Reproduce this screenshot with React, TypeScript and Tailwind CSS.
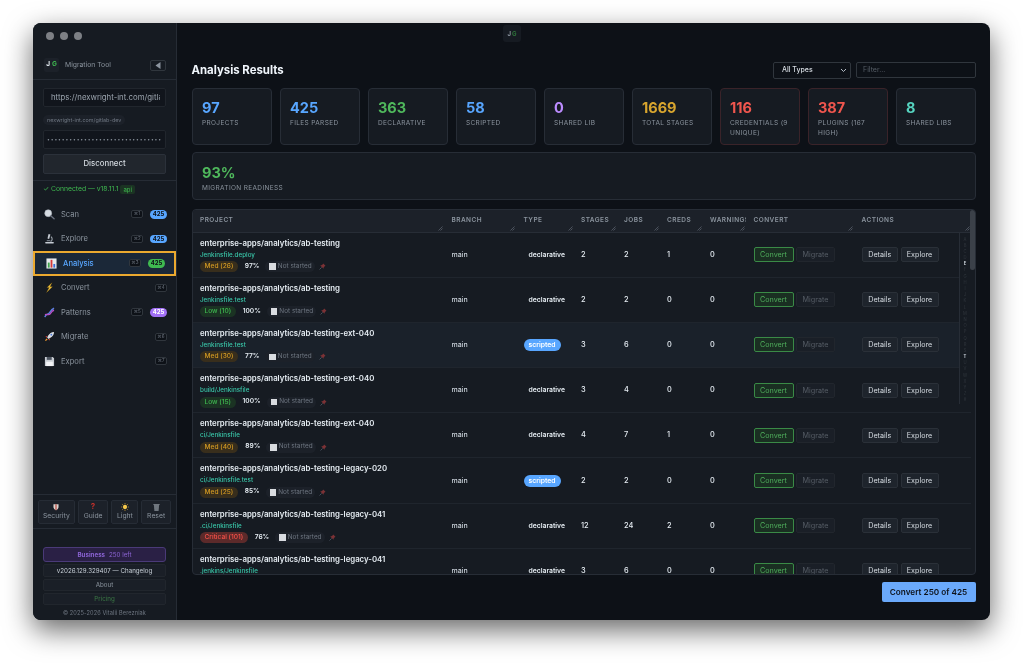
import React from "react";

const F = "font-['Inter','Liberation_Sans',sans-serif]";

function IconScan() {
  return (
    <svg width="11" height="11" viewBox="0 0 12 12">
      <circle cx="4.6" cy="4.6" r="3.8" fill="#d7dde3" stroke="#aab2bb" strokeWidth="0.6" />
      <path d="M7.6 7.6L11 10.6" stroke="#6b7280" strokeWidth="1.5" strokeLinecap="round" />
    </svg>
  );
}
function IconMicroscope() {
  return (
    <svg width="11" height="11" viewBox="0 0 12 12" fill="none">
      <path d="M5 1l2 .6-1.4 5-1.8-.6z" fill="#c6ccd3" />
      <path d="M7.6 4a3.2 3.2 0 0 1-.4 5.4" stroke="#a8b0b9" strokeWidth="1.1" />
      <path d="M2 10.6h8" stroke="#c6ccd3" strokeWidth="1.5" strokeLinecap="round" />
      <path d="M3 8.4h4" stroke="#8f98a3" strokeWidth="1" />
    </svg>
  );
}
function IconChart() {
  return (
    <svg width="11" height="11" viewBox="0 0 12 12">
      <rect x="0.5" y="0.5" width="11" height="11" fill="#e8ebee" />
      <rect x="2" y="5" width="2" height="5.5" fill="#3fa34d" />
      <rect x="5" y="2" width="2" height="8.5" fill="#d83a3a" />
      <rect x="8" y="6.5" width="2" height="4" fill="#3b6fd8" />
    </svg>
  );
}
function IconBolt() {
  return (
    <svg width="11" height="11" viewBox="0 0 12 12">
      <path d="M8.6 0.8L3.4 6h2.4L2.8 11.4l6.4-6.2H6.6z" fill="#f0c23a" stroke="#9a7414" strokeWidth="0.3" />
    </svg>
  );
}
function IconDna() {
  return (
    <svg width="11" height="11" viewBox="0 0 12 12" fill="none">
      <path d="M1 11C1.6 7 5 8.6 6.6 5.6 8 3 9 2 11 1.4" stroke="#5b7fe0" strokeWidth="1.7" />
      <path d="M1 8.4c3-.8 4.6 1 6-1.2 1.2-2 2-3.4 4-3.6" stroke="#b84fc4" strokeWidth="1.5" />
    </svg>
  );
}
function IconRocket() {
  return (
    <svg width="11" height="11" viewBox="0 0 12 12">
      <path d="M11 1c-3 .2-5 1.6-6.4 4L3.4 7l1.6 1.6 2-1.2C9.4 6 10.8 4 11 1z" fill="#d9dde2" />
      <path d="M3.6 5.2L1.6 6l1.2 1.4zM6.8 8.4L6 10.4 4.6 9.2z" fill="#d83a3a" />
      <path d="M2.8 8.2c-1 .6-1.4 1.8-1.6 2.8 1-.2 2.2-.6 2.8-1.6z" fill="#f29a2e" />
      <circle cx="8" cy="4" r="1" fill="#4a78d8" />
    </svg>
  );
}
function IconSave() {
  return (
    <svg width="11" height="11" viewBox="0 0 12 12">
      <path d="M1 1h8.5L11 2.5V11H1z" fill="#c9ced4" />
      <rect x="3" y="1" width="5.4" height="3.2" fill="#4d5560" />
      <rect x="2.4" y="6.2" width="7.2" height="4.8" fill="#f3f4f6" />
    </svg>
  );
}
function IconShield() {
  return (
    <svg width="6" height="8" viewBox="0 0 8 9">
      <path d="M0.6 0.8h6.8v3.6C7.4 6.4 5.8 8 4 8.8 2.2 8 .6 6.4.6 4.4z" fill="#d9d4cf" />
      <path d="M3.2 0.8h1.6v7.8L4 8.8l-.8-.4z" fill="#b9473f" />
    </svg>
  );
}
function IconSun() {
  return (
    <svg width="8" height="8" viewBox="0 0 9 9">
      <circle cx="4.5" cy="4.5" r="2.4" fill="#f5c84a" />
      <path d="M4.5 0v1.4M4.5 7.6V9M0 4.5h1.4M7.6 4.5H9M1.3 1.3l1 1M6.7 6.7l1 1M7.7 1.3l-1 1M2.3 6.7l-1 1" stroke="#e0a92c" strokeWidth="0.7" />
    </svg>
  );
}
function IconTrash() {
  return (
    <svg width="7" height="8" viewBox="0 0 8 9">
      <path d="M0.4 1h7.2v1H0.4z" fill="#8c939b" />
      <path d="M1 2.2h6L6.4 9H1.6z" fill="#6f767e" />
    </svg>
  );
}
function IconPin() {
  return (
    <svg width="7" height="7" viewBox="0 0 8 8">
      <path d="M4.8 0.6L7.4 3.2 6.5 3.6 5.3 5.2 5.2 6.6 1.4 2.8 2.8 2.7 4.4 1.5z" fill="#7c3236" />
      <path d="M3 5L.6 7.4" stroke="#6b7280" strokeWidth="0.7" />
    </svg>
  );
}
function Grip() {
  return (
    <svg width="5" height="5" viewBox="0 0 5 5" className="absolute right-[1px] bottom-[1px]">
      <path d="M0.5 4.5L4.5 0.5M2.5 4.5L4.5 2.5" stroke="#6b7280" strokeWidth="0.6" />
    </svg>
  );
}

const nav = [
  { n: "Scan", i: <IconScan />, k: "⌘1", b: "425", c: "bg-[#58a6ff] text-[#0d1117]" },
  { n: "Explore", i: <IconMicroscope />, k: "⌘2", b: "425", c: "bg-[#58a6ff] text-[#0d1117]" },
  { n: "Analysis", i: <IconChart />, k: "⌘3", b: "425", c: "bg-[#3fb950] text-[#0d1117]", active: true },
  { n: "Convert", i: <IconBolt />, k: "⌘4" },
  { n: "Patterns", i: <IconDna />, k: "⌘5", b: "425", c: "bg-[#a371f7] text-white" },
  { n: "Migrate", i: <IconRocket />, k: "⌘6" },
  { n: "Export", i: <IconSave />, k: "⌘7" },
];

const stats = [
  { v: "97", l: "Projects", c: "text-[#58a6ff]" },
  { v: "425", l: "Files Parsed", c: "text-[#58a6ff]" },
  { v: "363", l: "Declarative", c: "text-[#4fb85c]" },
  { v: "58", l: "Scripted", c: "text-[#58a6ff]" },
  { v: "0", l: "Shared Lib", c: "text-[#bc8cff]" },
  { v: "1669", l: "Total Stages", c: "text-[#d8a52e]" },
  { v: "116", l: "Credentials (9 unique)", c: "text-[#f0564e]", d: true },
  { v: "387", l: "Plugins (167 high)", c: "text-[#f0564e]", d: true },
  { v: "8", l: "Shared Libs", c: "text-[#56d4c0]" },
];

type Risk = "Med" | "Low" | "Critical";
const riskCls: Record<Risk, string> = {
  Med: "bg-[#382e1c] text-[#d29922]",
  Low: "bg-[#1b3323] text-[#3fb950]",
  Critical: "bg-[#5c2a2a] text-[#f85149]",
};

const rows: {
  p: string; f: string; r: Risk; s: number; pct: string; t: string; st: number; j: number; cr: number; alt?: boolean;
}[] = [
  { p: "enterprise-apps/analytics/ab-testing", f: "Jenkinsfile.deploy", r: "Med", s: 26, pct: "97%", t: "declarative", st: 2, j: 2, cr: 1 },
  { p: "enterprise-apps/analytics/ab-testing", f: "Jenkinsfile.test", r: "Low", s: 10, pct: "100%", t: "declarative", st: 2, j: 2, cr: 0 },
  { p: "enterprise-apps/analytics/ab-testing-ext-040", f: "Jenkinsfile.test", r: "Med", s: 30, pct: "77%", t: "scripted", st: 3, j: 6, cr: 0, alt: true },
  { p: "enterprise-apps/analytics/ab-testing-ext-040", f: "build/Jenkinsfile", r: "Low", s: 15, pct: "100%", t: "declarative", st: 3, j: 4, cr: 0 },
  { p: "enterprise-apps/analytics/ab-testing-ext-040", f: "ci/Jenkinsfile", r: "Med", s: 40, pct: "89%", t: "declarative", st: 4, j: 7, cr: 1 },
  { p: "enterprise-apps/analytics/ab-testing-legacy-020", f: "ci/Jenkinsfile.test", r: "Med", s: 25, pct: "85%", t: "scripted", st: 2, j: 2, cr: 0 },
  { p: "enterprise-apps/analytics/ab-testing-legacy-041", f: ".ci/Jenkinsfile", r: "Critical", s: 101, pct: "76%", t: "declarative", st: 12, j: 24, cr: 2 },
  { p: "enterprise-apps/analytics/ab-testing-legacy-041", f: ".jenkins/Jenkinsfile", r: "Med", s: 20, pct: "90%", t: "declarative", st: 3, j: 6, cr: 0 },
];

const letters = "ABCDEFGHIJKLMNOPQRSTUVWXYZ#".split("");
const heads = ["Project", "Branch", "Type", "Stages", "Jobs", "Creds", "Warnings", "Convert", "Actions"];
const numCell = "pl-[7.5px] text-[7.4px] leading-[10px] font-medium text-[#e6edf3]";

export default function App() {
  return (
    <div className={`${F} w-[1024px] h-[665px] bg-white pt-[23px] pl-[33px] overflow-hidden antialiased blur-[0.3px]`}>
      <div className="flex w-[957px] h-[597px] rounded-[8px] overflow-hidden bg-[#0d1117] shadow-[0_10px_28px_rgba(0,0,0,0.6)]">
        {/* Sidebar */}
        <aside className="flex flex-col w-[144px] shrink-0 bg-[#161b22] border-r border-[#262c35]">
          <div className="px-[10px] pt-[9px] h-[57px] border-b border-[#262c35]">
            <div className="flex gap-[6px] px-[3px]">
              <span className="w-[8px] h-[8px] rounded-full bg-[#7d8085]" />
              <span className="w-[8px] h-[8px] rounded-full bg-[#7d8085]" />
              <span className="w-[8px] h-[8px] rounded-full bg-[#7d8085]" />
            </div>
            <div className="flex items-center mt-[18px]">
              <span className="w-[15px] h-[14px] ml-[1px] flex items-center justify-center text-[6.5px] font-bold text-[#e6edf3] bg-[#1c2129] rounded-[2px]">J<span className="ml-[2px] text-[#3fb950]">G</span></span>
              <span className="ml-[6px] text-[6.8px] text-[#8b949e]">Migration Tool</span>
              <span className="ml-auto w-[16px] h-[11px] border border-[#30363d] rounded-[2px] flex items-center justify-center">
                <svg width="6" height="7" viewBox="0 0 6 7"><path d="M5.5 0v7L0.5 3.5z" fill="#8b949e" /></svg>
              </span>
            </div>
          </div>
          <div className="px-[10px] pt-[8px] h-[101px] border-b border-[#262c35] flex flex-col">
            <div className="h-[19px] rounded-[2px] bg-[#11151c] border border-[#21262d] flex items-center pl-[7px] overflow-hidden whitespace-nowrap text-[7.8px] text-[#9aa3ad]">
              <span className="w-[109px] overflow-hidden">https://nexwright-int.com/gitlab-dev</span>
            </div>
            <div className="mt-[8px] self-start h-[10px] px-[4px] rounded-full bg-[#1c2129] text-[5.4px] leading-[10px] text-[#6e7681]">nexwright-int.com/gitlab-dev</div>
            <div className="mt-[5px] h-[19px] rounded-[2px] bg-[#11151c] border border-[#21262d] flex items-center justify-center overflow-hidden text-[5px] tracking-[0.9px] text-[#8b949e] whitespace-nowrap">•••••••••••••••••••••••••••••••</div>
            <div className="mt-[5px] h-[20px] rounded-[2px] bg-[#21262d] border border-[#2b313a] flex items-center justify-center text-[7.8px] font-medium text-[#d4dae0]">Disconnect</div>
          </div>
          <div className="px-[10px] h-[17px] flex items-center text-[6.8px] text-[#3fb950]">
            <span>✓ Connected — v18.11.1</span>
            <span className="ml-[2px] px-[3px] h-[9px] leading-[9px] rounded-[2px] bg-[#1b3323] text-[6px]">api</span>
          </div>
          <nav className="mt-[4px] flex flex-col">
            {nav.map((x) => (
              <div
                key={x.n}
                className={`h-[24.5px] flex items-center pl-[11px] pr-[9px] ${x.active ? "bg-[#1b2838] border-2 border-solid border-[#eba92f]" : ""}`}
              >
                <span className="w-[11px] h-[11px] shrink-0 flex">{x.i}</span>
                <span className={`ml-[6px] text-[7.6px] ${x.active ? "text-[#58a6ff] font-medium" : "text-[#8b949e]"}`}>{x.n}</span>
                <span className={`ml-auto w-[12px] h-[8px] rounded-[2px] border border-[#30363d] bg-[#0d1117] text-[4.5px] leading-[6px] text-center text-[#6e7681] ${x.b ? "mr-[7px]" : ""}`}>{x.k}</span>
                {x.b && <span className={`w-[17px] h-[8.5px] rounded-full text-[6px] leading-[8.5px] font-bold text-center ${x.c}`}>{x.b}</span>}
              </div>
            ))}
          </nav>
          <div className="mt-auto h-[35px] border-t border-b border-[#262c35] flex items-center justify-center gap-[3px] px-[5px]">
            {[
              { l: "Security", i: <IconShield />, w: "w-[37px]" },
              { l: "Guide", i: <span className="text-[8px] leading-[9px] font-bold text-[#c0302b]">?</span>, w: "w-[31px]" },
              { l: "Light", i: <IconSun />, w: "w-[27px]" },
              { l: "Reset", i: <IconTrash />, w: "w-[30px]" },
            ].map((b) => (
              <div key={b.l} className={`${b.w} h-[24px] rounded-[2px] bg-[#1c2129] border border-[#262c35] flex flex-col items-center justify-center`}>
                <span className="h-[9px] flex items-center">{b.i}</span>
                <span className="text-[6.8px] leading-[10px] text-[#8b949e]">{b.l}</span>
              </div>
            ))}
          </div>
          <div className="h-[91px] px-[10px] pt-[18px] flex flex-col">
            <div className="h-[15px] rounded-[3px] bg-[#2a2045] border border-[#4a3a78] flex items-center justify-center text-[6.2px] text-[#8a63d2]">
              <span className="font-bold">Business</span><span className="ml-[4px]">250 left</span>
            </div>
            <div className="mt-[2px] h-[13px] rounded-[2px] bg-[#1a1f27] border border-[#21262d] flex items-center justify-center text-[6.2px] text-[#c9d1d9] whitespace-nowrap">v2026.129.329407 — Changelog</div>
            <div className="mt-[2px] h-[12px] rounded-[2px] bg-[#1a1f27] border border-[#21262d] flex items-center justify-center text-[6.2px] text-[#8b949e]">About</div>
            <div className="mt-[2px] h-[12px] rounded-[2px] bg-[#1a1f27] border border-[#21262d] flex items-center justify-center text-[6.2px] text-[#3b7a45]">Pricing</div>
            <div className="mt-[3px] text-center text-[5.6px] leading-[10px] text-[#6e7681] tracking-[0.1px] whitespace-nowrap">© 2025-2026 Vitalii Berezniak</div>
          </div>
        </aside>

        {/* Main */}
        <main className="relative flex-1 min-w-0 px-[14.5px] flex flex-col">
          <div className="absolute top-[2px] left-[326px] w-[18px] h-[17px] rounded-[3px] bg-[#161b22] flex items-center justify-center text-[6px] font-bold text-[#8b949e]">J<span className="ml-[1px] text-[#2f7a3c]">G</span></div>
          <div className="mt-[38px] h-[18px] flex items-center">
            <h1 className="pt-[2px] text-[11.4px] font-bold text-[#f0f6fc]">Analysis Results</h1>
            <div className="ml-auto h-[17px] w-[78px] rounded-[2px] bg-[#0d1117] border border-[#30363d] flex items-center pl-[8px] pr-[3px] text-[7px] font-medium text-[#d8dee4]">
              All Types
              <svg className="ml-auto" width="7" height="5" viewBox="0 0 7 5" fill="none"><path d="M1 1l2.5 2.5L6 1" stroke="#b1bac4" strokeWidth="1" /></svg>
            </div>
            <div className="ml-[5px] h-[16px] w-[119.5px] rounded-[2px] bg-[#0d1117] border border-[#30363d] flex items-center pl-[6px] text-[7px] text-[#565d66]">Filter...</div>
          </div>
          <div className="mt-[9px] flex gap-[8px]">
            {stats.map((s) => (
              <div key={s.v} className={`flex-1 w-0 h-[57px] rounded-[4px] bg-[#161b22] border pl-[9.5px] pr-[6px] pt-[10px] ${s.d ? "border-[#3a2329]" : "border-[#272d36]"}`}>
                <div className={`text-[14.5px] leading-[18px] font-bold ${s.c}`}>{s.v}</div>
                <div className="mt-[1px] text-[6.5px] leading-[10px] uppercase tracking-[0.35px] text-[#8b949e]">{s.l}</div>
              </div>
            ))}
          </div>
          <div className="mt-[7px] h-[48px] rounded-[4px] bg-[#161b22] border border-[#272d36] pl-[9.5px] pt-[11px]">
            <div className="text-[14.5px] leading-[18px] font-bold text-[#4fb85c]">93%</div>
            <div className="mt-[1px] text-[6.5px] leading-[10px] uppercase tracking-[0.35px] text-[#8b949e]">Migration Readiness</div>
          </div>

          {/* Table */}
          <div className="relative mt-[9px] h-[366px] rounded-[4px] bg-[#161b22] border border-[#272d36] overflow-hidden">
            <table className="table-fixed w-[778px] border-collapse text-left">
              <colgroup>
                <col className="w-[251.5px]" />
                <col className="w-[72px]" />
                <col className="w-[57.5px]" />
                <col className="w-[43px]" />
                <col className="w-[43px]" />
                <col className="w-[43px]" />
                <col className="w-[43.5px]" />
                <col className="w-[108px]" />
                <col className="w-[116.5px]" />
              </colgroup>
              <thead>
                <tr className="h-[22px] bg-[#1c2129] border-b border-[#272d36]">
                  {heads.map((h) => (
                    <th key={h} className="relative pl-[7.5px] text-[6.5px] font-semibold uppercase tracking-[0.45px] text-[#8b949e] overflow-hidden whitespace-nowrap">
                      {h}
                      <Grip />
                    </th>
                  ))}
                </tr>
              </thead>
              <tbody>
                {rows.map((r, i) => (
                  <tr key={i} className={`h-[45.2px] border-b border-[#1f252d] ${r.alt ? "bg-[#1a212a]" : ""}`}>
                    <td className="pl-[7.5px] align-top pt-[5px] overflow-hidden">
                      <div className="text-[7.8px] leading-[11px] font-semibold text-[#e6edf3] whitespace-nowrap">{r.p}</div>
                      <div className="mt-[2px] text-[6.3px] leading-[9px] font-medium text-[#39c5a8] whitespace-nowrap">{r.f}</div>
                      <div className="mt-[1.5px] flex items-center">
                        <span className={`h-[11px] px-[4.5px] rounded-full text-[6.6px] leading-[11px] font-medium ${riskCls[r.r]}`}>{r.r} ({r.s})</span>
                        <span className="ml-[7px] text-[6.6px] font-semibold text-[#e6edf3]">{r.pct}</span>
                        <span className="ml-[6px] h-[11px] pr-[3px] pl-[4px] rounded-full bg-[#1c2129] flex items-center text-[6.4px] text-[#6e7681]">
                          <span className="w-[6.5px] h-[6.5px] mr-[2px] bg-[#d9dce0]" />Not started
                        </span>
                        <span className="ml-[4px] flex"><IconPin /></span>
                      </div>
                    </td>
                    <td className="pl-[7.5px] text-[7px] leading-[10px] font-medium text-[#c9d1d9]">main</td>
                    <td className="pl-[7.5px] text-[6.8px] leading-[10px]">
                      {r.t === "scripted" ? (
                        <div className="h-[12px] w-[37px] rounded-full bg-[#58a6ff] text-center leading-[12px] font-semibold text-white">scripted</div>
                      ) : (
                        <div className="pl-[5px] font-semibold text-[#e6edf3]">declarative</div>
                      )}
                    </td>
                    <td className={numCell}>{r.st}</td>
                    <td className={numCell}>{r.j}</td>
                    <td className={numCell}>{r.cr}</td>
                    <td className={numCell}>0</td>
                    <td className="pl-[7.5px]">
                      <div className="flex gap-[2.5px]">
                        <span className="w-[40px] h-[15px] rounded-[2px] bg-[#1a2f22] border border-[#3a8a46] text-[7.2px] leading-[13px] text-center text-[#4fae5c]">Convert</span>
                        <span className="w-[39px] h-[15px] rounded-[2px] bg-[#1a1f27] border border-[#21262d] text-[7.2px] leading-[13px] text-center text-[#565d66]">Migrate</span>
                      </div>
                    </td>
                    <td className="pl-[7.5px]">
                      <div className="flex gap-[2.5px]">
                        <span className="w-[36.5px] h-[15px] rounded-[2px] bg-[#1e242c] border border-[#2a3038] text-[7.2px] leading-[13px] text-center text-[#d4dae0]">Details</span>
                        <span className="w-[38px] h-[15px] rounded-[2px] bg-[#1e242c] border border-[#2a3038] text-[7.2px] leading-[13px] text-center text-[#d4dae0]">Explore</span>
                      </div>
                    </td>
                  </tr>
                ))}
              </tbody>
            </table>
            <div className="absolute top-[23px] left-[766px] w-[12px] border-l border-[#272d36] bg-[#161b22] flex flex-col items-center pt-[3.5px]">
              {letters.map((l) => (
                <span key={l} className={`h-[6.2px] text-[4.2px] leading-[6.2px] ${l === "E" || l === "T" ? "text-[#c9d1d9] font-bold" : "text-[#30363d]"}`}>{l}</span>
              ))}
            </div>
            <div className="absolute top-0 right-0 w-[5px] h-[60px] rounded-full bg-[#3b4149]" />
          </div>

          <div className="mt-[7px] flex justify-end">
            <div className="w-[94px] h-[20px] rounded-[2px] bg-[#6aa9fb] flex items-center justify-center text-[8.2px] font-semibold text-[#0d1117]">Convert 250 of 425</div>
          </div>
        </main>
      </div>
    </div>
  );
}
